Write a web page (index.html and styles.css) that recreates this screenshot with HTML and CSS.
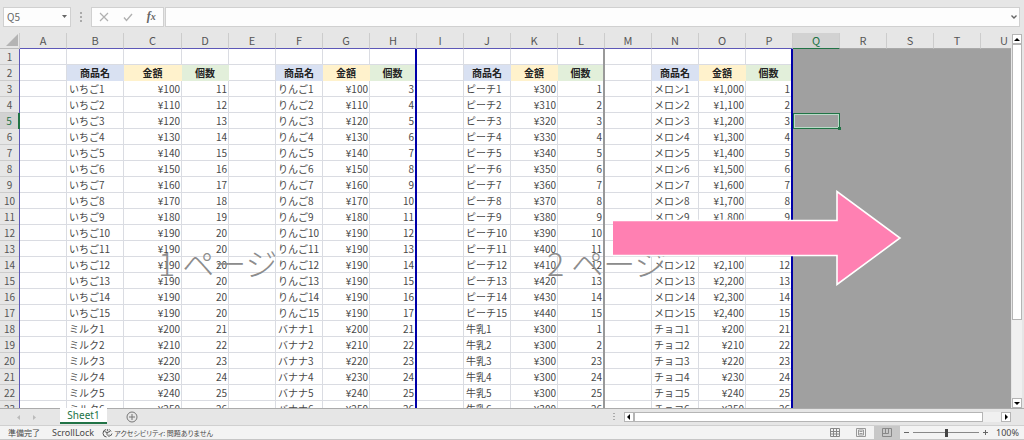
FILE: index.html
```html
<!DOCTYPE html>
<html lang="ja">
<head>
    <meta charset="UTF-8">
    <meta name="viewport" content="width=device-width, initial-scale=1.0">
    <title>Sheet1</title>
    <link rel="stylesheet" href="styles.css">
</head>
<body>
    <div class="app">
        <header class="formula-bar">
            <div class="name-box">
                <input class="name-input" type="text" value="Q5" aria-label="名前ボックス">
                <button class="name-arrow" type="button" aria-label="名前の一覧">
                    <svg width="5" height="3" viewBox="0 0 5 3"><path d="M0 0h5L2.5 3z" fill="#666"/></svg>
                </button>
            </div>
            <svg class="grip" width="3" height="12" viewBox="0 0 3 12" fill="#aaa"><path d="M0 1h2v2H0zM0 5h2v2H0zM0 9h2v2H0z"/></svg>
            <div class="formula-buttons">
                <button type="button" aria-label="キャンセル">
                    <svg width="10" height="10" viewBox="0 0 10 10" fill="none" stroke="#b0b0b0" stroke-width="1.2"><path d="M1 1l8 8M9 1L1 9"/></svg>
                </button>
                <button type="button" aria-label="入力">
                    <svg width="10" height="10" viewBox="0 0 10 10" fill="none" stroke="#b0b0b0" stroke-width="1.4"><path d="M1 5.500l2.500 3L9 2"/></svg>
                </button>
                <button class="fx" type="button" aria-label="関数の挿入">f<small>x</small></button>
            </div>
            <div class="formula-field">
                <input class="formula-input" type="text" aria-label="数式バー">
                <svg width="6" height="4" viewBox="0 0 6 4" fill="none" stroke="#666" stroke-width="1.4"><path d="M.5.5L3 3 5.500.5"/></svg>
            </div>
        </header>

        <main class="workspace">
            <div class="sheet">
                <table class="grid">
                    <colgroup id="cols"></colgroup>
                    <thead><tr id="letters"></tr></thead>
                    <tbody id="rows"></tbody>
                </table>
                <div class="page-mark page-one">1 ページ</div>
                <div class="page-mark page-two">2 ページ</div>
                <svg class="arrow" width="290" height="96" viewBox="0 0 290 96">
                    <path d="M1 30.500H225V1.500L288 48L225 94.500V65.500H1" fill="#ff80b2" stroke="#fff" stroke-width="1.6"/>
                </svg>
            </div>
            <div class="scroll-v">
                <button type="button" aria-label="上へ"><svg width="6" height="3" viewBox="0 0 6 3"><path d="M0 3h6L3 0z"/></svg></button>
                <div class="track"><div class="thumb"></div></div>
                <button type="button" aria-label="下へ"><svg width="6" height="3" viewBox="0 0 6 3"><path d="M0 0h6L3 3z"/></svg></button>
            </div>
        </main>

        <nav class="tab-bar">
            <div class="tab-arrows">
                <svg width="3" height="5" viewBox="0 0 3 5" fill="#bbb"><path d="M3 0v5L0 2.500z"/></svg>
                <svg width="3" height="5" viewBox="0 0 3 5" fill="#bbb"><path d="M0 0v5l3-2.500z"/></svg>
            </div>
            <button class="tab" type="button">Sheet1</button>
            <button class="add-tab" type="button" aria-label="新しいシート">
                <svg width="12" height="12" viewBox="0 0 12 12" fill="none" stroke="#777"><circle cx="6" cy="6" r="5"/><path d="M6 3v6M3 6h6"/></svg>
            </button>
            <div class="scroll-h">
                <svg class="grip" width="3" height="8" viewBox="0 0 3 8" fill="#aaa"><path d="M0 0h2v1H0zM0 3h2v1H0zM0 6h2v1H0z"/></svg>
                <button type="button" aria-label="左へ"><svg width="3" height="6" viewBox="0 0 3 6"><path d="M3 0v6L0 3z"/></svg></button>
                <div class="track"><div class="thumb"></div></div>
                <button type="button" aria-label="右へ"><svg width="3" height="6" viewBox="0 0 3 6"><path d="M0 0v6l3-3z"/></svg></button>
            </div>
        </nav>

        <footer class="status-bar">
            <span class="status-ja">準備完了</span>
            <span class="status-en">ScrollLock</span>
            <span class="status-ja status-access">
                <svg width="11" height="10" viewBox="0 0 11 10" fill="none" stroke="#555"><path d="M4 1.500A3.800 3.800 0 0 0 4.500 9M2.500 3.500L5 4.500l3-1M5 4.500v2l2.500 2.500M7.500 1.500L9 3.500M10 5.500L8.500 8 7 6.500"/><circle cx="5.500" cy="2" r=".5"/></svg>
                アクセシビリティ: 問題ありません
            </span>
            <div class="views">
                <button type="button" aria-label="標準">
                    <svg width="10" height="9" viewBox="0 0 10 9" fill="none" stroke="#888"><path d="M.5.5h9v8h-9zM.5 3.500h9M.5 6h9M3.500.5v8M6.500.5v8"/></svg>
                </button>
                <button type="button" aria-label="ページ レイアウト">
                    <svg width="10" height="9" viewBox="0 0 10 9" fill="none" stroke="#999"><path d="M.5.5h9v8h-9zM2.500 2h5v5h-5zM3.500 3.500h3M3.500 5.500h3"/></svg>
                </button>
                <button class="active" type="button" aria-label="改ページ プレビュー">
                    <svg width="10" height="9" viewBox="0 0 10 9" fill="none" stroke="#888"><path d="M.5.5h9v8h-9zM.5 5.500h6v-5M3.500.5v5"/></svg>
                </button>
            </div>
            <div class="zoom">
                <button type="button" aria-label="縮小"><svg width="5" height="5" viewBox="0 0 5 5"><path d="M0 2h5v1H0z" fill="#666"/></svg></button>
                <input type="range" min="0" max="100" value="50" aria-label="ズーム">
                <button type="button" aria-label="拡大"><svg width="5" height="5" viewBox="0 0 5 5"><path d="M0 2h5v1H0zM2 0h1v5H2z" fill="#666"/></svg></button>
                <span class="status-en">100%</span>
            </div>
        </footer>
    </div>
    <script src="script.js"></script>
</body>
</html>
```

FILE: styles.css
```css
* {
    box-sizing: border-box;
}
body {
    margin: 0;
    font-family: "Noto Sans CJK JP", sans-serif;
    font-size: 10px;
    color: #484848;
    background: #e6e6e6;
}
button,
input {
    margin: 0;
    padding: 0;
    border: none;
    background: none;
    font: inherit;
    color: inherit;
}
button {
    display: flex;
    align-items: center;
    justify-content: center;
}
.app {
    display: flex;
    flex-direction: column;
    height: 100vh;
    overflow: hidden;
}

/* formula bar */
.formula-bar {
    display: flex;
    align-items: center;
    height: 33px;
    flex: none;
    padding: 0 4px 0 3px;
}
.name-box,
.formula-buttons,
.formula-field {
    display: flex;
    align-items: center;
    height: 20px;
    background: #fdfdfd;
    border: 1px solid #d0d0d0;
}
.name-box {
    width: 68px;
    padding: 0 3px;
}
.name-input {
    flex: 1;
    min-width: 0;
    color: #666;
}
.name-arrow {
    width: 6px;
    height: 16px;
}
.formula-bar .grip {
    margin: 0 8px 0 9px;
}
.formula-buttons {
    width: 73px;
    margin-right: 1px;
}
.formula-buttons button {
    flex: 1;
}
.fx {
    font: italic bold 12px "Liberation Serif", serif;
    color: #666;
}
.fx small {
    font-size: 10px;
}
.formula-field {
    flex: 1;
    padding-right: 2px;
}
.formula-input {
    flex: 1;
}

/* worksheet */
.workspace {
    display: flex;
    flex: 1;
    min-height: 0;
}
.sheet {
    position: relative;
    flex: 1;
    min-width: 0;
    overflow: hidden;
    background: #a0a0a0;
}
.grid {
    width: 1028px;
    table-layout: fixed;
    border-collapse: separate;
    border-spacing: 0;
}
.grid th,
.grid td {
    height: 16px;
    padding: 0 2px;
    line-height: 15px;
    overflow: hidden;
    white-space: nowrap;
}
.grid th {
    background: #e6e6e6;
    font-weight: normal;
    text-align: center;
    color: #555;
}
.grid thead th {
    border-right: 1px solid #ccc;
    border-bottom: 1px solid #5d58b8;
    font-size: 11px;
}
.grid tbody th {
    border-right: 1px solid #5d58b8;
    box-shadow: inset 0 -1px #ccc;
    padding: 0 0 1px;
}
.grid thead .corner {
    padding: 0 1px 1px 0;
    border-bottom-color: #bbb;
}
.corner svg {
    display: block;
    margin-left: auto;
}
.grid thead .outside {
    border-bottom-color: #aaa;
}
.grid thead .current {
    background: #d2d2d2;
    border-bottom: 1px solid #217346;
    color: #217346;
}
.grid tbody .current {
    background: #d2d2d2;
    border-right: 2px solid #217346;
    color: #217346;
}
.grid td {
    background: #fff;
    border-right: 1px solid #dadce2;
    border-bottom: 1px solid #dadce2;
}
.grid .number {
    padding-right: 1px;
    text-align: right;
}
.grid .title {
    border-color: transparent;
    font-weight: bold;
    text-align: center;
    color: #222;
}
.grid .title-name {
    background: #d9e1f2;
}
.grid .title-price {
    background: #fff2cc;
}
.grid .title-count {
    background: #e2efda;
}
/* the row line is a shadow here, so the page line stays unbroken */
.grid td.edge,
.grid td.page-break {
    padding-bottom: 1px;
    border-bottom: none;
    border-right: 2px solid #0000a8;
    box-shadow: inset 0 -1px #dadce2;
}
.grid td.page-break {
    border-right-color: #999;
}
.grid td.title {
    box-shadow: none;
}
.grid td.outside {
    background: #a0a0a0;
    border: none;
}
.grid td.selected {
    position: relative;
    border: 1px solid #217346;
    box-shadow: inset 0 0 0 1px #b9dcc8;
    overflow: visible;
}
.grid td.selected::after {
    content: "";
    position: absolute;
    right: -2px;
    bottom: -2px;
    width: 3px;
    height: 3px;
    background: #217346;
}
.page-mark {
    position: absolute;
    top: 205px;
    font-size: 32px;
    font-weight: 300;
    line-height: 48px;
    color: #8c8c8c;
    white-space: nowrap;
}
.page-one {
    left: 158px;
}
.page-two {
    left: 547px;
}
.arrow {
    position: absolute;
    left: 612px;
    top: 157px;
}

/* scroll bars */
.scroll-v {
    display: flex;
    flex-direction: column;
    width: 13px;
    padding: 1px 2px 0 1px;
    background: #e6e6e6;
}
.scroll-v button,
.scroll-h button {
    flex: none;
    width: 10px;
    height: 10px;
    background: #fff;
    border: 1px solid #b5b5b5;
}
.track {
    flex: 1;
    background: #f0f0f0;
}
.thumb {
    background: #fff;
    border: 1px solid #b5b5b5;
}
.scroll-v .thumb {
    height: 78%;
}
.scroll-h {
    display: flex;
    align-items: center;
    width: 40%;
    margin-left: auto;
    padding-left: 6px;
}
.scroll-h .grip {
    margin-right: 8px;
}
.scroll-h .thumb {
    width: 95%;
    height: 10px;
}

/* sheet tabs */
.tab-bar {
    display: flex;
    flex: none;
    height: 17px;
    padding-right: 13px;
    border-top: 1px solid #ababab;
}
.tab-arrows {
    display: flex;
    align-items: center;
    justify-content: center;
    gap: 13px;
    width: 52px;
    margin-right: 8px;
}
.tab {
    width: 47px;
    height: 16px;
    margin-top: -1px;
    background: #fff;
    border-bottom: 2px solid #217346;
    font-family: "Noto Sans", sans-serif;
    font-size: 10px;
    color: #217346;
}
.add-tab {
    margin-left: 19px;
}

/* status bar */
.status-bar {
    display: flex;
    align-items: center;
    flex: none;
    height: 15px;
    padding: 0 5px 0 8px;
    background: #f3f3f3;
    border-top: 1px solid #d0d0d0;
    border-bottom: 1px solid #c6c6c6;
    white-space: nowrap;
}
.status-ja {
    font-size: 8px;
    font-feature-settings: "palt";
}
.status-en {
    font-family: "Noto Sans", sans-serif;
    font-size: 9px;
}
.status-bar > .status-en {
    margin: 0 8px 0 12px;
}
.status-access {
    display: flex;
    align-items: center;
    gap: 1px;
    font-size: 7px;
}
.views {
    display: flex;
    height: 100%;
    margin-left: auto;
}
.views button {
    width: 26px;
}
.views .active {
    background: #c8c8c8;
}
.zoom {
    display: flex;
    align-items: center;
    margin-left: 4px;
}
.zoom input {
    width: 66px;
    height: 9px;
    margin: 0 4px;
    appearance: none;
    background: linear-gradient(#888, #888) center / 100% 1px no-repeat;
}
.zoom input::-webkit-slider-thumb {
    appearance: none;
    width: 3px;
    height: 8px;
    background: #444;
}
.zoom .status-en {
    margin-left: 8px;
}
```

FILE: script.js
```js
const columns = 'ABCDEFGHIJKLMNOPQRSTU'.split('');
const widths = { B: 57, C: 58 };
const rowCount = 23;

// 各表の開始列と、上段15行・下段6行の値
const tables = [
    {
        start: 1,
        names: ['いちご', 'ミルク'],
        price: n => n <= 15 ? Math.min(100 + (n - 1) * 10, 190) : 200 + (n - 16) * 10,
        count: n => n <= 15 ? Math.min(n + 10, 20) : n + 5
    },
    {
        start: 5,
        names: ['りんご', 'バナナ'],
        price: n => n <= 15 ? Math.min(100 + (n - 1) * 10, 190) : 200 + (n - 16) * 10,
        count: n => n <= 15 ? n + 2 : n + 5
    },
    {
        start: 9,
        names: ['ピーチ', '牛乳'],
        price: n => n <= 15 ? 300 + (n - 1) * 10 : 300,
        count: n => n <= 15 ? n : (n <= 17 ? n - 15 : n + 5)
    },
    {
        start: 13,
        names: ['メロン', 'チョコ'],
        price: n => n <= 15 ? 1000 + (n - 1) * 100 : 200 + (n - 16) * 10,
        count: n => n <= 15 ? n : n + 5
    }
];

function fillCell(td, row, col) {
    const table = tables.find(t => col >= t.start && col < t.start + 3);
    if (!table || row < 2) return;

    const field = col - table.start;
    if (row === 2) {
        td.textContent = ['商品名', '金額', '個数'][field];
        td.classList.add('title', ['title-name', 'title-price', 'title-count'][field]);
        return;
    }

    const n = row - 2;
    if (field === 0) {
        td.textContent = n <= 15 ? table.names[0] + n : table.names[1] + (n - 15);
    } else {
        td.classList.add('number');
        td.textContent = field === 1 ? '¥' + table.price(n).toLocaleString('en-US') : table.count(n);
    }
}

function buildSheet() {
    const cols = document.getElementById('cols');
    const letters = document.getElementById('letters');
    const rows = document.getElementById('rows');

    cols.innerHTML = '<col style="width:20px">' +
        columns.map(c => `<col style="width:${widths[c] || 47}px">`).join('');

    letters.innerHTML = '<th class="corner"><svg width="12" height="12" viewBox="0 0 12 12"><path d="M12 0v12H0z" fill="#b4b4b4"/></svg></th>' +
        columns.map((c, i) => `<th class="${i > 15 ? 'outside' : ''} ${c === 'Q' ? 'current' : ''}">${c}</th>`).join('');

    for (let row = 1; row <= rowCount; row++) {
        const tr = rows.insertRow();
        const th = document.createElement('th');
        th.textContent = row;
        if (row === 5) th.className = 'current';
        tr.appendChild(th);

        columns.forEach((c, i) => {
            const td = tr.insertCell();
            if (i > 15) td.classList.add('outside');
            fillCell(td, row, i);
            if (c === 'H' || c === 'P') td.classList.add('edge');
            if (c === 'L') td.classList.add('page-break');
            if (c === 'Q' && row === 5) td.classList.add('selected');
        });
    }
}

buildSheet();
```
